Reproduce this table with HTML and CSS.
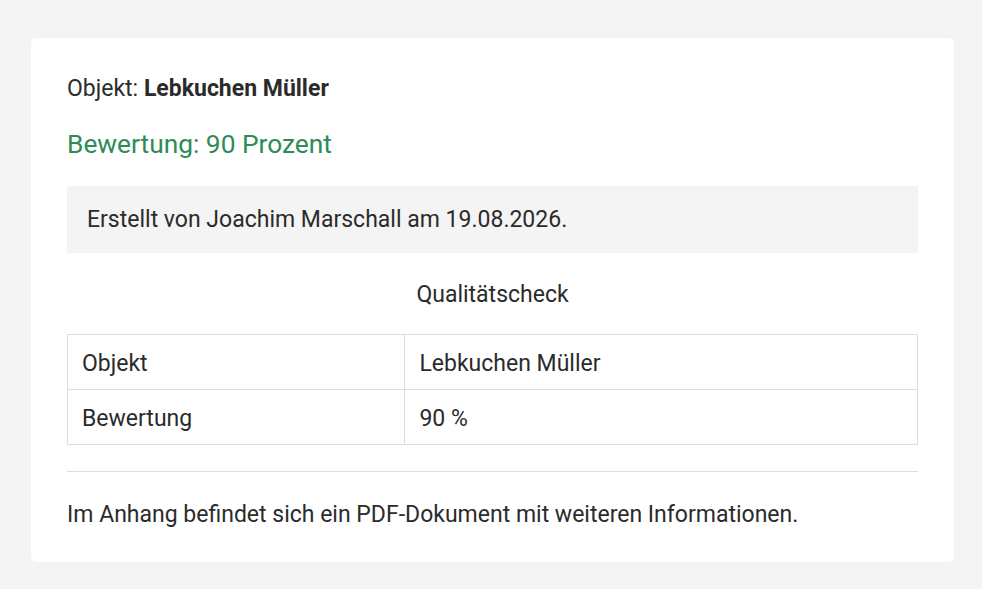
FILE: index.html
```html
<!DOCTYPE html>
<html lang="de">
<head>
    <meta charset="UTF-8">
    <meta name="viewport" content="width=device-width, initial-scale=1.0">
    <title>Qualitätscheck</title>
    <link rel="stylesheet" href="styles.css">
</head>
<body>
    <div class="card">
        <p class="subject">Objekt: <strong>Lebkuchen Müller</strong></p>
        <h2 class="rating">Bewertung: 90 Prozent</h2>

        <div class="note">Erstellt von Joachim Marschall am 19.08.2026.</div>

        <table class="check">
            <caption>Qualitätscheck</caption>
            <tr>
                <td class="label">Objekt</td>
                <td>Lebkuchen Müller</td>
            </tr>
            <tr>
                <td class="label">Bewertung</td>
                <td>90 %</td>
            </tr>
        </table>

        <hr>

        <p class="footer">Im Anhang befindet sich ein PDF-Dokument mit weiteren Informationen.</p>
    </div>
</body>
</html>
```

FILE: styles.css
```css
body {
    font-family: Roboto, "Liberation Sans", Arial, sans-serif;
    font-size: 23px;
    line-height: 28px;
    color: #2b2b2b;
    background: #f4f4f4;
    margin: 0;
    padding: 38px 0 0 31px;
}

.card {
    background: #fff;
    width: 923px;
    box-sizing: border-box;
    padding: 37px 36px 33px;
    border-radius: 5px;
}

.subject {
    margin: 0;
}

.subject strong {
    font-weight: 700;
}

.rating {
    margin: 25px 0 0;
    font-size: 26.3px;
    line-height: 32px;
    font-weight: 400;
    color: #2e8b57;
}

.note {
    margin-top: 26px;
    background: #f4f4f4;
    padding: 20px 20px 19px;
}

.check {
    width: 100%;
    margin-top: 28px;
    border-collapse: collapse;
}

.check caption {
    padding-bottom: 25px;
    text-align: center;
}

.check td {
    border: 1px solid #ddd;
    padding: 15px 14px 11px;
}

.check td.label {
    width: 39.7%;
}

hr {
    border: none;
    border-top: 1px solid #ddd;
    margin: 26px 0 0;
}

.footer {
    margin: 29px 0 0;
}
```
